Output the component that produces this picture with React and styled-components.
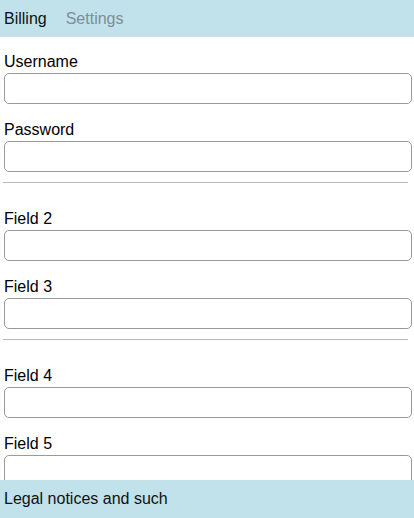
import styled, { createGlobalStyle } from "styled-components";

const Global = createGlobalStyle`
    html, body {
        margin: 0;
        padding: 0;
    }
    body {
        font-family: "Liberation Sans", Arial, sans-serif;
        color: #000;
        background: #fff;
    }
`

const sections = [
    ["Username", "Password"],
    ["Field 2", "Field 3"],
    ["Field 4", "Field 5"],
]

function App(){
    return(
        <>
            <Global />
            <Page>
                <TabBar>
                    <Tab active>Billing</Tab>
                    <Tab>Settings</Tab>
                </TabBar>
                <Content>
                    {sections.map((fields, i) => (
                        <Section key={i} first={i === 0}>
                            {i > 0 && <Divider />}
                            {fields.map(name => (
                                <Field key={name}>
                                    <Label>{name}</Label>
                                    <Input type={name === "Password" ? "password" : "text"} />
                                </Field>
                            ))}
                        </Section>
                    ))}
                </Content>
                <Footer>Legal notices and such</Footer>
            </Page>
        </>
    )
}

const Page = styled.div`
    display: flex;
    flex-direction: column;
    height: 100vh;
    width: 100%;
`

const TabBar = styled.div`
    display: flex;
    align-items: center;
    gap: 19px;
    height: 37px;
    flex-shrink: 0;
    padding: 0 4px;
    background-color: #c1e1eb;
`

const Tab = styled.span`
    font-size: 16px;
    color: ${props => props.active ? "#111" : "#7d8e98"};
`

const Content = styled.div`
    flex: 1;
    overflow-y: auto;
    padding: 0 2px 0 4px;
    &::-webkit-scrollbar {
        display: none;
    }
`

const Section = styled.div`
    display: flex;
    flex-direction: column;
    gap: 17px;
    padding: ${props => props.first ? "16px" : "0"} 0 10px;
`

const Divider = styled.hr`
    border: none;
    border-top: 1px solid #b8b8b8;
    margin: 0 0 10px -1px;
    width: 405px;
`

const Field = styled.div`
    display: flex;
    flex-direction: column;
    gap: 2px;
`

const Label = styled.label`
    font-size: 16px;
    line-height: 18px;
`

const Input = styled.input`
    box-sizing: border-box;
    width: 100%;
    height: 31px;
    border: 1px solid #9a9a9a;
    border-radius: 5px;
    background: #fff;
    font-family: inherit;
    font-size: 16px;
    padding: 0 6px;
`

const Footer = styled.div`
    display: flex;
    align-items: center;
    height: 38px;
    flex-shrink: 0;
    padding: 0 4px;
    background-color: #c1e1eb;
    font-size: 16px;
    color: #111;
`

export default App;
